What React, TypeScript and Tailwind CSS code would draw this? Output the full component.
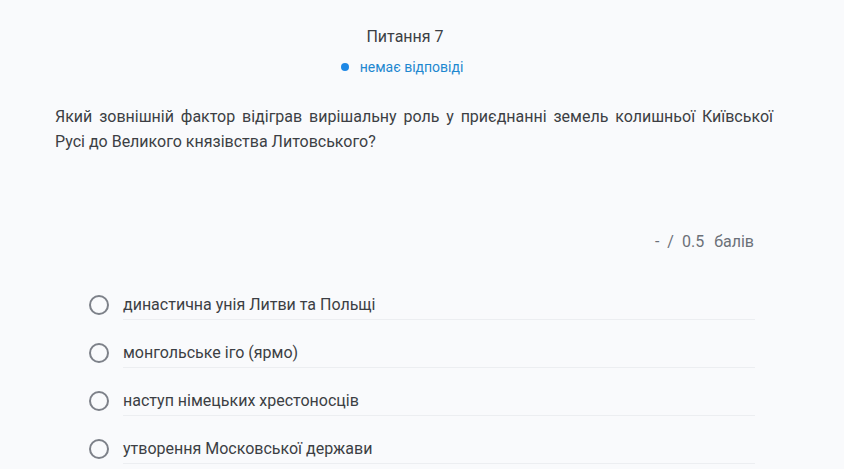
import React from "react";

const options = [
  "династична унія Литви та Польщі",
  "монгольське іго (ярмо)",
  "наступ німецьких хрестоносців",
  "утворення Московської держави",
];

const Radio = () => (
  <div className="h-[20px] w-[20px] shrink-0 rounded-full border-2 border-[#7d8189]" />
);

export default function App() {
  return (
    <div
      className="min-h-[469px] w-full bg-[#f9fafc] text-[#3c3f44]"
      style={{ fontFamily: "Roboto, 'Liberation Sans', sans-serif" }}
    >
      <div className="ml-[55px] w-[700px] pt-[27px]">
        <div className="text-center text-[16px] leading-[20px] text-[#3c3f44]">
          Питання 7
        </div>
        <div className="mt-[11px] flex items-center justify-center gap-[11px] pr-[6px] text-[14px] leading-[18px] text-[#1e88d0]">
          <span className="h-[8px] w-[8px] rounded-full bg-[#1e88e5]" />
          <span>немає відповіді</span>
        </div>
        <p className="mt-[28px] w-[718px] text-justify text-[16px] leading-[25px] text-[#3c3f44]">
          Який зовнішній фактор відіграв вирішальну роль у приєднанні земель
          колишньої Київської Русі до Великого князівства Литовського?
        </p>
        <div className="mt-[78px] flex justify-end gap-[8px] pr-[1px] text-[16px] leading-[20px] text-[#6b7078]">
          <span>-</span>
          <span>/</span>
          <span>0.5</span>
          <span className="ml-[2px]">балів</span>
        </div>
        <div className="mt-[29px] flex flex-col">
          {options.map((o) => (
            <div key={o} className="flex h-[48px] items-center pl-[34px]">
              <Radio />
              <div className="ml-[14px] flex h-[30px] flex-1 items-center border-b border-[#eceef1] pt-[1px] text-[16px] text-[#3c3f44]">
                {o}
              </div>
            </div>
          ))}
        </div>
      </div>
    </div>
  );
}
